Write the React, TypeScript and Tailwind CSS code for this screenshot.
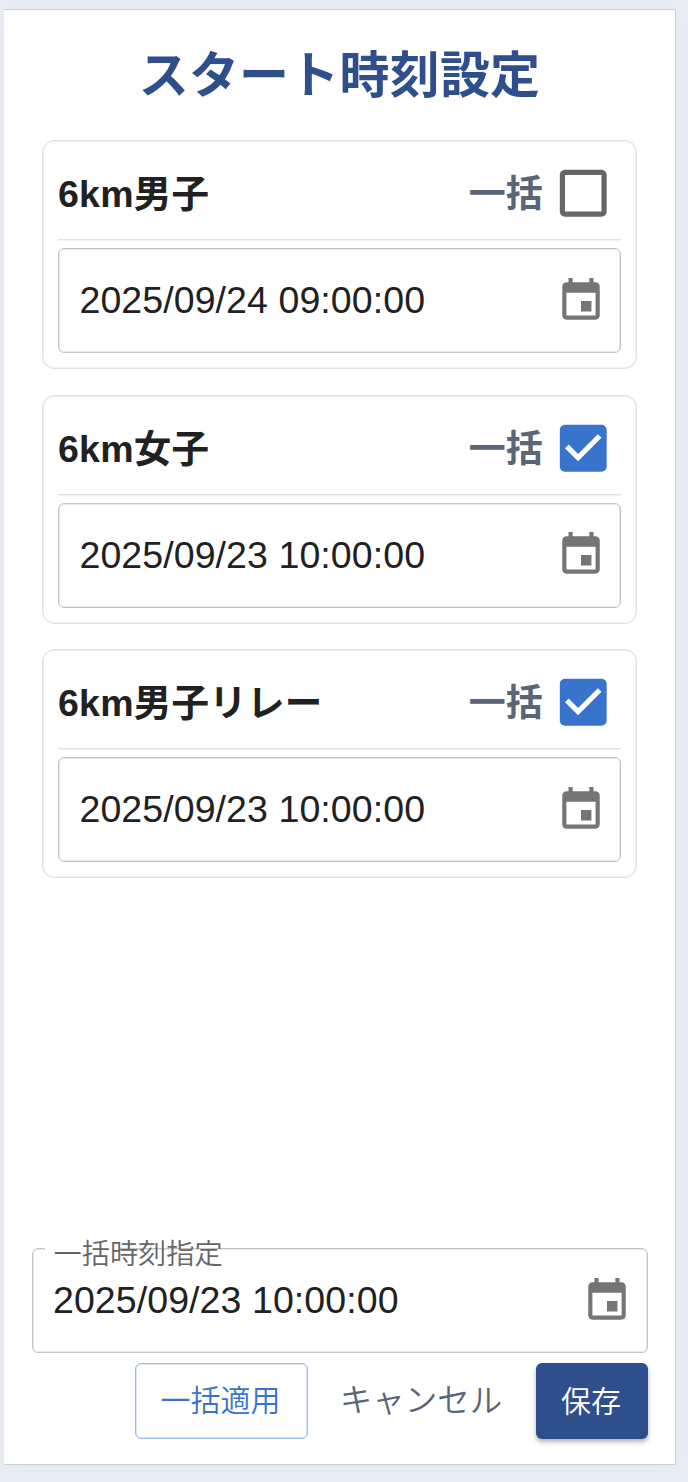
import { useState } from "react";

const font = "font-['Liberation_Sans','Noto_Sans_CJK_JP',sans-serif]";

function CalendarIcon() {
  return (
    <svg viewBox="0 0 24 24" className="mt-px size-[50px] shrink-0 fill-[#757575]">
      <path d="M17 12h-5v5h5v-5zM16 1v2H8V1H6v2H5c-1.11 0-1.99.9-1.99 2L3 19c0 1.1.89 2 2 2h14c1.1 0 2-.9 2-2V5c0-1.1-.9-2-2-2h-1V1h-2zm3 18H5V8h14v11z" />
    </svg>
  );
}

function CheckIcon({ checked }: { checked: boolean }) {
  return checked ? (
    <svg viewBox="0 0 24 24" className="size-[62.5px] fill-[#3874cb]">
      <path d="M19 3H5c-1.11 0-2 .9-2 2v14c0 1.1.89 2 2 2h14c1.11 0 2-.9 2-2V5c0-1.1-.89-2-2-2zm-9 14l-5-5 1.41-1.41L10 14.17l7.59-7.59L19 8l-9 9z" />
    </svg>
  ) : (
    <svg viewBox="0 0 24 24" className="size-[62.5px] fill-[#666666]">
      <path d="M19 5v14H5V5h14m0-2H5c-1.1 0-2 .9-2 2v14c0 1.1.9 2 2 2h14c1.1 0 2-.9 2-2V5c0-1.1-.9-2-2-2z" />
    </svg>
  );
}

function RaceCard({ name, time, initial }: { name: string; time: string; initial: boolean }) {
  const [checked, setChecked] = useState(initial);
  return (
    <section className="h-[229px] rounded-[12px] border border-[#e0e0e0] px-[15px] shadow-[inset_0_0_0_1px_#f1f1f1]">
      <div className="flex h-[98px] items-center pt-[7px] shadow-[0_1px_0_#e0e0e0,0_2px_0_#f3f3f3]">
        <h2 className="flex-1 pt-px text-[37.5px] leading-[48px] font-bold tracking-[0.25px] text-[#212121]">{name}</h2>
        <span className="mr-[9px] pt-[3px] text-[37px] leading-[48px] font-bold text-[#5a6675]">一括</span>
        <button type="button" aria-label="一括" className="mr-[6.7px]" onClick={() => setChecked(!checked)}>
          <CheckIcon checked={checked} />
        </button>
      </div>
      <div className="mt-[9px] flex h-[105px] items-center rounded-[6px] border border-[#c4c4c4] pr-[14.5px] pb-px pl-[20.5px] shadow-[inset_0_0_0_1px_#e8e8e8]">
        <span className="flex-1 text-[37.5px] leading-[48px] tracking-[0.08px] text-[#212121]">{time}</span>
        <CalendarIcon />
      </div>
    </section>
  );
}

const races = [
  { name: "6km男子", time: "2025/09/24 09:00:00", initial: false },
  { name: "6km女子", time: "2025/09/23 10:00:00", initial: true },
  { name: "6km男子リレー", time: "2025/09/23 10:00:00", initial: true },
];

export default function App() {
  return (
    <div className={`h-[1482px] w-[688px] overflow-hidden bg-[#e9edf5] pt-[9px] pl-[4px] ${font}`}>
      <main className="flex h-[1456px] w-[672px] flex-col border-t border-r border-b border-[#cfcfd3] bg-white shadow-[0_2px_20px_rgba(0,0,0,0.03)]">
        <h1 className="pt-[30px] text-center text-[50px] leading-[72px] font-bold tracking-[0.2px] text-[#2e4e8c]">スタート時刻設定</h1>
        <div className="mt-[28px] mr-[38px] ml-[38px] flex flex-col gap-[25.6px]">
          {races.map((r) => (
            <RaceCard key={r.name} {...r} />
          ))}
        </div>
        <div className="mt-auto mr-[27px] mb-[25px] ml-[28px]">
          <div className="relative flex h-[105px] items-center rounded-[6px] border border-[#c4c4c4] pr-[15px] pb-px pl-[20px] shadow-[inset_0_0_0_1px_#e8e8e8]">
            <span className="absolute top-[-1px] left-[12px] h-[2px] w-[74px] bg-white" />
            <span className="absolute top-[-15px] left-[20.5px] text-[28.2px] leading-[40px] font-[350] text-[#666666]">一括時刻指定</span>
            <span className="flex-1 text-[37.5px] leading-[48px] tracking-[0.08px] text-[#212121]">2025/09/23 10:00:00</span>
            <CalendarIcon />
          </div>
          <div className="mt-[10px] flex h-[76px] justify-end text-[30px] leading-[44px] font-[350]">
            <button type="button" className="w-[173px] rounded-[6px] border border-[#9bb9e5] pr-[2px] text-[#3874cb] shadow-[inset_0_0_0_1px_#dbe6f6]">一括適用</button>
            <button type="button" className="w-[228px] pr-[2px] text-[32.5px] text-[#5a6675]">キャンセル</button>
            <button type="button" className="w-[112px] rounded-[6px] bg-[#2e4e8c] pt-px pr-[2px] text-white shadow-[0_3px_5px_rgba(0,0,0,0.3)]">保存</button>
          </div>
        </div>
      </main>
    </div>
  );
}
